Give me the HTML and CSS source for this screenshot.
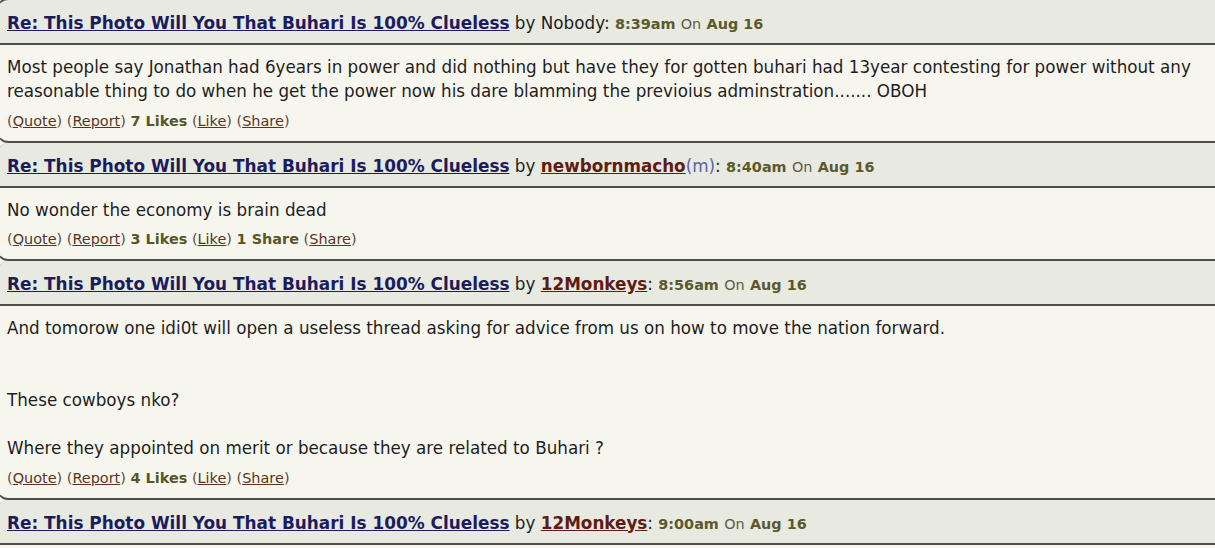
FILE: index.html
```html
<!DOCTYPE html>
<html>
<head>
<meta charset="utf-8">
<title>Re: This Photo Will You That Buhari Is 100% Clueless</title>
<link rel="stylesheet" href="styles.css">
</head>
<body>
<div class="thread">
  <div class="post-head">
    <a class="title" href="#">Re: This Photo Will You That Buhari Is 100% Clueless</a> by Nobody: <span class="time">8:39am</span> <span class="on">On</span> <span class="time">Aug 16</span>
  </div>
  <div class="post-body">
    <div class="narrow">Most people say Jonathan had 6years in power and did nothing but have they for gotten buhari had 13year contesting for power without any reasonable thing to do when he get the power now his dare blamming the previoius adminstration....... OBOH</div>
    <p class="actions">(<a href="#">Quote</a>) (<a href="#">Report</a>) <b class="likes">7 Likes</b> (<a href="#">Like</a>) (<a href="#">Share</a>)</p>
  </div>

  <div class="post-head">
    <a class="title" href="#">Re: This Photo Will You That Buhari Is 100% Clueless</a> by <a class="user" href="#">newbornmacho</a><span class="gender">(m)</span>: <span class="time">8:40am</span> <span class="on">On</span> <span class="time">Aug 16</span>
  </div>
  <div class="post-body">
    <div class="narrow">No wonder the economy is brain dead</div>
    <p class="actions">(<a href="#">Quote</a>) (<a href="#">Report</a>) <b class="likes">3 Likes</b> (<a href="#">Like</a>) <b class="likes">1 Share</b> (<a href="#">Share</a>)</p>
  </div>

  <div class="post-head">
    <a class="title" href="#">Re: This Photo Will You That Buhari Is 100% Clueless</a> by <a class="user" href="#">12Monkeys</a>: <span class="time">8:56am</span> <span class="on">On</span> <span class="time">Aug 16</span>
  </div>
  <div class="post-body">
    <div class="narrow">And tomorow one idi0t will open a useless thread asking for advice from us on how to move the nation forward.<br><br><br>These cowboys nko?<br><br>Where they appointed on merit or because they are related to Buhari ?</div>
    <p class="actions">(<a href="#">Quote</a>) (<a href="#">Report</a>) <b class="likes">4 Likes</b> (<a href="#">Like</a>) (<a href="#">Share</a>)</p>
  </div>

  <div class="post-head">
    <a class="title" href="#">Re: This Photo Will You That Buhari Is 100% Clueless</a> by <a class="user" href="#">12Monkeys</a>: <span class="time">9:00am</span> <span class="on">On</span> <span class="time">Aug 16</span>
  </div>
  <div class="post-body">
    <div class="narrow">&nbsp;</div>
  </div>
</div>
</body>
</html>
```

FILE: styles.css
```css
html, body {
  margin: 0;
  padding: 0;
  background: #f7f6ee;
  overflow: hidden;
}

.thread {
  margin: -2px -30px 0 -3px;
  font-family: "DejaVu Sans", Verdana, sans-serif;
  color: #1e1e1e;
}

.post-head {
  background: #e8e9e1;
  border-left: 1px solid #c4c4ba;
  border-bottom: 2px solid #4e4e46;
  border-top-left-radius: 11px;
  padding: 11px 10px 8px 9px;
  font-size: 16.8px;
  line-height: 24px;
  height: 24px;
  white-space: nowrap;
}

.post-head:first-child {
  border-top: 2px solid #4e4e46;
}

.post-head a,
.post-head span {
  line-height: 16px;
}

.title {
  color: #1c1c5c;
  font-weight: bold;
  text-decoration: underline;
  font-size: 16.9px;
}

.user {
  color: #5e1c12;
  font-weight: bold;
  text-decoration: underline;
}

.gender {
  color: #5a62a6;
}

.time {
  font-size: 14.4px;
  font-weight: bold;
  color: #5a5a2c;
}

.on {
  font-size: 14.4px;
  color: #5e5e3c;
}

.post-body {
  background: #f7f6ee;
  border-left: 1px solid #c4c4ba;
  border-bottom: 2px solid #4e4e46;
  border-bottom-left-radius: 11px;
  padding: 10px 30px 10px 9px;
}

.narrow {
  font-size: 16.75px;
  line-height: 24px;
}

.actions {
  margin: 7.5px 0 0;
  font-size: 14.45px;
  line-height: 20px;
  color: #5a4a38;
}

.actions a,
.actions b {
  line-height: 16px;
}

.actions a {
  color: #5a3422;
  text-decoration: underline;
}

.likes {
  color: #575728;
}
```
